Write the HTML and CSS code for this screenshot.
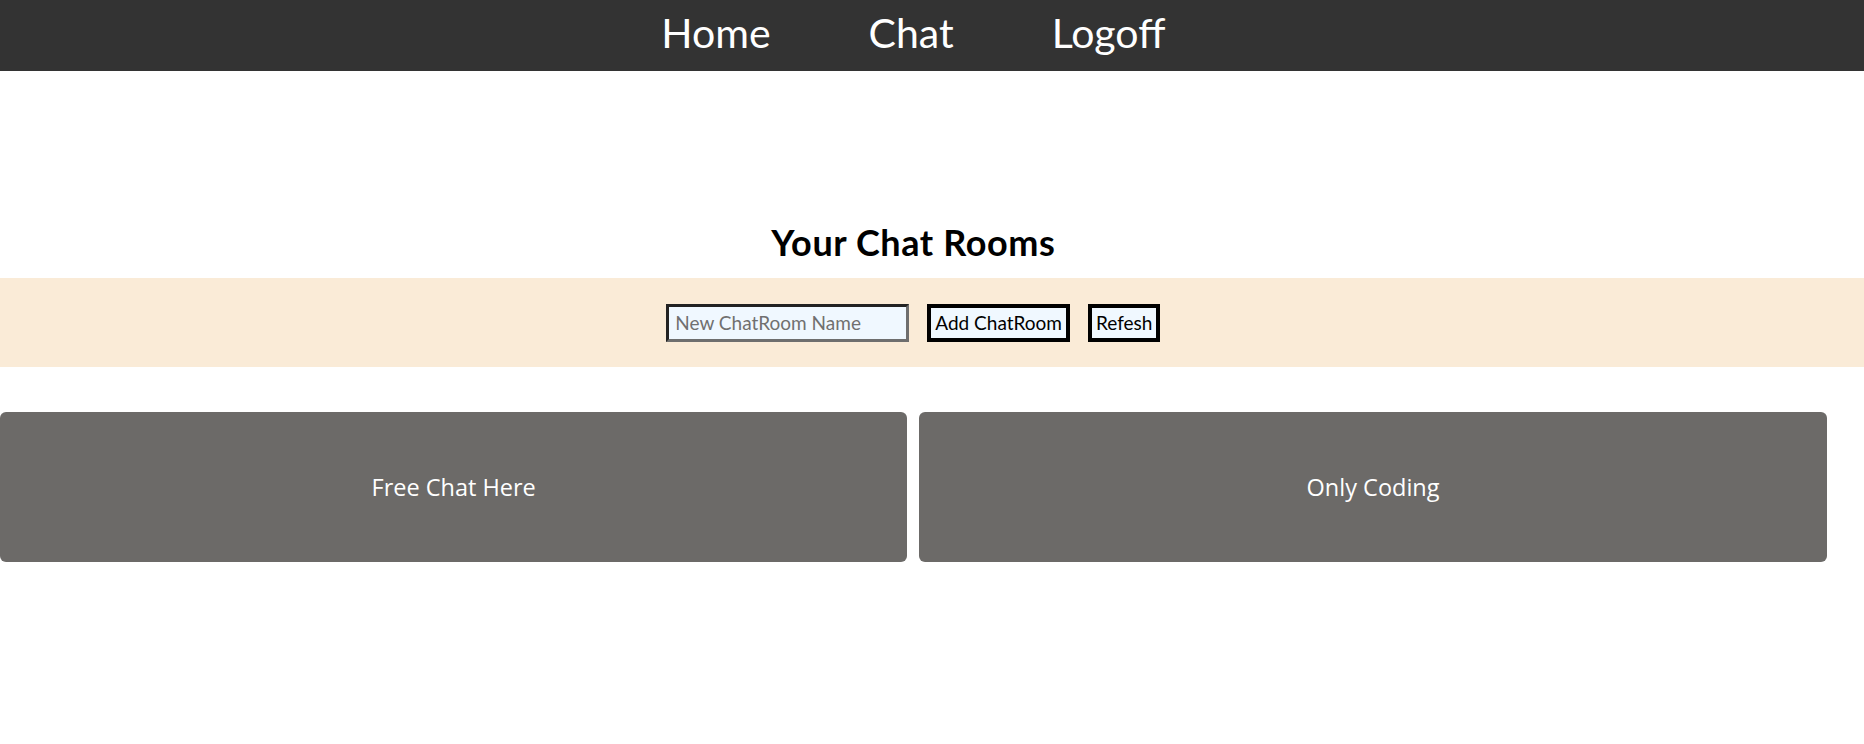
FILE: index.html
```html
<!DOCTYPE html>
<html>
<head>
<meta charset="utf-8">
<title>Chat Rooms</title>
<link rel="stylesheet" href="styles.css">
</head>
<body>
<header class="topbar">
  <nav class="nav">
    <a class="nav-link" href="#">Home</a>
    <a class="nav-link" href="#">Chat</a>
    <a class="nav-link" href="#">Logoff</a>
  </nav>
</header>
<main class="page">
  <h2 class="title">Your Chat Rooms</h2>
  <section class="toolbar">
    <div class="toolbar-inner">
      <input class="room-input" type="text" placeholder="New ChatRoom Name">
      <button class="btn">Add ChatRoom</button>
      <button class="btn">Refesh</button>
    </div>
  </section>
  <section class="rooms">
    <div class="room">Free Chat Here</div>
    <div class="room">Only Coding</div>
  </section>
</main>
</body>
</html>
```
FILE: styles.css
```css
html, body {
  margin: 0;
  padding: 0;
  background: #ffffff;
  font-family: Lato, "Open Sans", sans-serif;
}

.topbar {
  background: #333333;
  height: 71px;
}

.nav {
  width: 98%;
  height: 71px;
  display: flex;
  justify-content: center;
  align-items: center;
  gap: 98px;
}

.nav-link {
  color: #ffffff;
  text-decoration: none;
  font-size: 41px;
  line-height: 71px;
  padding-bottom: 6px;
}

.page {
  padding-top: 151px;
}

.title {
  width: 98%;
  margin: 0;
  text-align: center;
  font-size: 36px;
  font-weight: 700;
  letter-spacing: 0.6px;
  line-height: 40px;
  color: #000000;
  padding-bottom: 16px;
}

.toolbar {
  background: #faebd7;
  height: 89px;
}

.toolbar-inner {
  width: 98%;
  height: 89px;
  display: flex;
  justify-content: center;
  align-items: center;
  gap: 18px;
}

.room-input {
  box-sizing: border-box;
  width: 243px;
  height: 38px;
  border-style: solid;
  border-width: 3px;
  border-color: #222222 #6e6e6e #6e6e6e #222222;
  background: #f0f8ff;
  font-family: inherit;
  font-size: 19px;
  padding: 0 6px;
  outline: none;
}

.room-input::placeholder {
  color: #707070;
}

.btn {
  box-sizing: border-box;
  height: 38px;
  border: 4px solid #000000;
  background: #f0f8ff;
  font-family: inherit;
  font-size: 19px;
  color: #000000;
  padding: 0 4px;
}

.rooms {
  width: 98%;
  display: grid;
  grid-template-columns: 1fr 1fr;
  gap: 12px;
  margin-top: 45px;
}

.room {
  height: 150px;
  background: #6c6a68;
  border-radius: 6px;
  color: #ffffff;
  font-family: "Open Sans", Lato, sans-serif;
  font-size: 23.5px;
  display: flex;
  align-items: center;
  justify-content: center;
}
```
